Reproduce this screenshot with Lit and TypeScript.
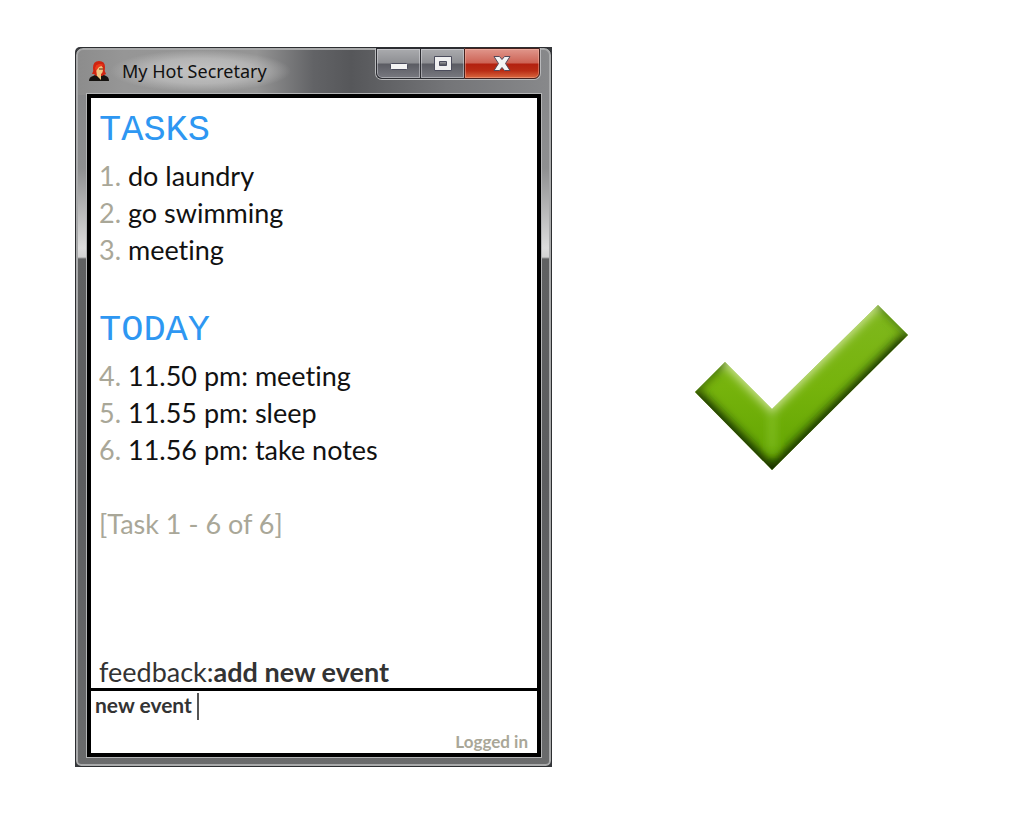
import { LitElement, html, css, svg } from "lit";
import { customElement, property } from "lit/decorators.js";

interface Entry {
  id: number;
  text: string;
}

const tasks: Entry[] = [
  { id: 1, text: "do laundry" },
  { id: 2, text: "go swimming" },
  { id: 3, text: "meeting" },
];

const today: Entry[] = [
  { id: 4, text: "11.50 pm: meeting" },
  { id: 5, text: "11.55 pm: sleep" },
  { id: 6, text: "11.56 pm: take notes" },
];

const avatar = svg`
  <path d="M1 21 Q1 17 5 16 L9 14 L14 14 L18 16 Q21 17 21 21 Z" fill="#15120f"/>
  <path d="M6 14 L4 14 Q6 11 5 8 Q5 1 11 1 Q17 1 17 7 Q16 11 18 14 L14 16 L8 16 Z" fill="#cf2410"/>
  <path d="M9 5 Q15 5 15 9 Q15 13 13 14 L13 20 L9 16 L8 9 Z" fill="#f1c580"/>
  <path d="M7 8 Q9 2 16 5 L11 7 L8 11 Z" fill="#ed3a1c"/>
  <path d="M11 9 H15" stroke="#5a2010" stroke-width="1"/>
`;

@customElement("app-window")
export class AppWindow extends LitElement {
  @property() caption = "";

  static styles = css`
    :host {
      display: block;
    }
    .frame {
      box-sizing: border-box;
      border: 1px solid #2c2e31;
      border-radius: 8px 8px 6px 6px;
      box-shadow: inset 0 0 0 2px #a9aaab;
      padding: 0 10px 9px 11px;
      background:
        linear-gradient(90deg, #8c8c8c 0%, #969696 10%, #949494 38%, #626366 50%, #56575a 58%, #747578 78%, #88898b 100%) top / 100% 47px no-repeat,
        linear-gradient(180deg, #87888a 47px, #8e8f90 120px, #dcdcdc 200px, #d2d2d2 209px, #606162 211px, #5c5d5f 60%, #6a6b6c 100%);
    }
    .shell {
      background: #35373b;
      border-radius: 5px 0 0 0;
    }
    .bar {
      display: flex;
      height: 46px;
    }
    .name {
      display: flex;
      align-items: center;
      flex: 1;
      min-width: 0;
      padding-left: 1px;
    }
    .avatar {
      width: 22px;
      height: 22px;
      flex: none;
    }
    .title {
      margin: 0;
      padding: 0 24px 0 12px;
      font: 400 18px/42px "Noto Sans", "Open Sans", sans-serif;
      color: #111;
      white-space: nowrap;
      background: radial-gradient(closest-side, rgba(200, 200, 200, 0.9) 0%, rgba(190, 190, 190, 0.75) 60%, rgba(150, 150, 150, 0) 100%);
    }
    .controls {
      display: flex;
      align-self: flex-start;
      border: 1px solid #b9babc;
      border-top: 0;
      border-radius: 0 0 7px 7px;
    }
    .control {
      box-sizing: border-box;
      display: block;
      width: 44px;
      height: 31px;
      margin: 0;
      padding: 0;
      border: 1px solid #2b2c31;
      border-right-width: 0;
      box-shadow: inset 0 0 0 1px rgba(230, 230, 235, 0.45);
      background: linear-gradient(#aaabae 0%, #8e8f93 48%, #5b5c63 52%, #787980 100%);
    }
    .control:first-child {
      border-bottom-left-radius: 6px;
    }
    .close {
      width: 76px;
      border-right-width: 1px;
      border-color: #45201d;
      border-bottom-right-radius: 6px;
      box-shadow: inset 0 0 0 1px rgba(255, 200, 180, 0.4);
      background: linear-gradient(#e0968b 0%, #cd6355 48%, #b3200f 52%, #b92c15 75%, #d9673f 100%);
    }
    .glyph {
      display: block;
      margin: auto;
    }
    .client {
      border: 4px solid #000;
      outline: 1px solid #b4b5b6;
      background: #fff;
    }
  `;

  render() {
    return html`
      <div class="shell">
        <div class="frame">
          <header class="bar">
            <div class="name">
              <svg class="avatar" viewBox="0 0 22 22" aria-hidden="true">${avatar}</svg>
              <h1 class="title">${this.caption}</h1>
            </div>
            <div class="controls">
              <button class="control" aria-label="Minimize">
                <svg class="glyph" width="24" height="20" viewBox="0 0 24 20">
                  <rect x="3.500" y="9.500" width="17" height="6" rx="1" fill="#f4f4f4" stroke="#4b4c5c" stroke-width="1"/>
                </svg>
              </button>
              <button class="control" aria-label="Maximize">
                <svg class="glyph" width="24" height="20" viewBox="0 0 24 20">
                  <path fill-rule="evenodd" d="M3.500 2.500 H20.500 V16.500 H3.500 Z M8.500 7.500 V11.500 H15.500 V7.500 Z" fill="#f0f0f0" stroke="#4b4c5c"/>
                </svg>
              </button>
              <button class="control close" aria-label="Close">
                <svg class="glyph" width="24" height="20" viewBox="0 0 24 20">
                  <path d="M4 2.500 H9.500 L12 5.500 L14.500 2.500 H20 L15.500 9.500 L20 16.500 H14.500 L12 13.500 L9.500 16.500 H4 L8.500 9.500 Z" fill="#f4f4f4" stroke="#54495a"/>
                </svg>
              </button>
            </div>
          </header>
          <div class="client"><slot></slot></div>
        </div>
      </div>
    `;
  }
}

@customElement("app-root")
export class AppRoot extends LitElement {
  static styles = css`
    :host {
      display: block;
      min-height: 100vh;
      background: #fff;
      font-family: Lato, "Open Sans", sans-serif;
      font-variant-ligatures: none;
    }
    .page {
      display: grid;
      grid-template-columns: minmax(0, 477fr) minmax(0, 355fr);
      column-gap: 72px;
      align-items: center;
      padding: 47px 37px 47px 75px;
    }
    .log {
      padding: 12px 8px 0;
      font-size: 27px;
      line-height: 37px;
      color: #111;
    }
    .heading {
      margin: 0;
      font: 400 37px/40px "Liberation Mono", "Courier New", monospace;
      color: #2e97f2;
    }
    .list {
      margin: 7px 0 42px;
      padding: 0;
      list-style: none;
    }
    .list.last {
      margin-bottom: 37px;
    }
    .number,
    .range {
      color: #a9a798;
    }
    .range {
      margin: 0;
    }
    .feedback {
      margin: 114px 0 0;
      line-height: 32px;
      color: #333;
    }
    .command {
      border-top: 3px solid #000;
      padding: 0 9px 0 4px;
    }
    .entry {
      display: flex;
      align-items: center;
      height: 30px;
    }
    .field {
      field-sizing: content;
      max-width: 90%;
      margin: 0;
      padding: 0 0 2px;
      border: 0;
      outline: 0;
      background: none;
      font: 700 21px/24px Lato, "Open Sans", sans-serif;
      color: #333;
      white-space: pre;
    }
    .caret {
      width: 2px;
      height: 27px;
      background: #555;
    }
    .status {
      margin: 0;
      padding: 10px 0 0;
      font-size: 17px;
      font-weight: 700;
      line-height: 22px;
      text-align: right;
      color: #a9a798;
    }
    .tick {
      display: block;
      width: 60%;
      margin: 0 auto 40px;
    }
  `;

  private list(items: Entry[], last = false) {
    return html`
      <ol class="list ${last ? "last" : ""}">
        ${items.map((item) => html`<li><span class="number">${item.id}.</span> ${item.text}</li>`)}
      </ol>
    `;
  }

  render() {
    return html`
      <main class="page">
        <app-window caption="My Hot Secretary">
          <section class="log">
            <h2 class="heading">TASKS</h2>
            ${this.list(tasks)}
            <h2 class="heading">TODAY</h2>
            ${this.list(today, true)}
            <p class="range">[Task 1 - 6 of 6]</p>
            <p class="feedback">feedback:<strong>add new event</strong></p>
          </section>
          <section class="command">
            <div class="entry">
              <input class="field" aria-label="Command" .value=${"new event "} />
              <span class="caret"></span>
            </div>
            <p class="status">Logged in</p>
          </section>
        </app-window>
        <svg class="tick" viewBox="0 0 213 165" role="img" aria-label="Done">
          <defs>
            <linearGradient id="base" x1="0" y1="0" x2="0" y2="1">
              <stop offset="0" stop-color="#80b81e"/>
              <stop offset="0.5" stop-color="#76b30c"/>
              <stop offset="1" stop-color="#60a300"/>
            </linearGradient>
            <clipPath id="shape"><path d="M0 87 L30 57 L77 104 L183 0 L213 30 L77 165 Z"/></clipPath>
            <filter id="soft" x="-20%" y="-20%" width="140%" height="140%"><feGaussianBlur stdDeviation="5"/></filter>
          </defs>
          <g clip-path="url(#shape)">
            <rect width="213" height="165" fill="url(#base)"/>
            <g filter="url(#soft)" fill="none">
              <path d="M30 54 L77 101 L183 -3" stroke="#d0e59a" stroke-width="10"/>
              <path d="M-3 88 L77 168 L217 30" stroke="#142f00" stroke-width="14"/>
              <path d="M-3 86 L30 53" stroke="#3f680e" stroke-width="9"/>
              <path d="M183 -4 L216 29" stroke="#4f7f19" stroke-width="9"/>
              <path d="M77 105 V145" stroke="#92cb35" stroke-width="4"/>
            </g>
          </g>
        </svg>
      </main>
    `;
  }
}
